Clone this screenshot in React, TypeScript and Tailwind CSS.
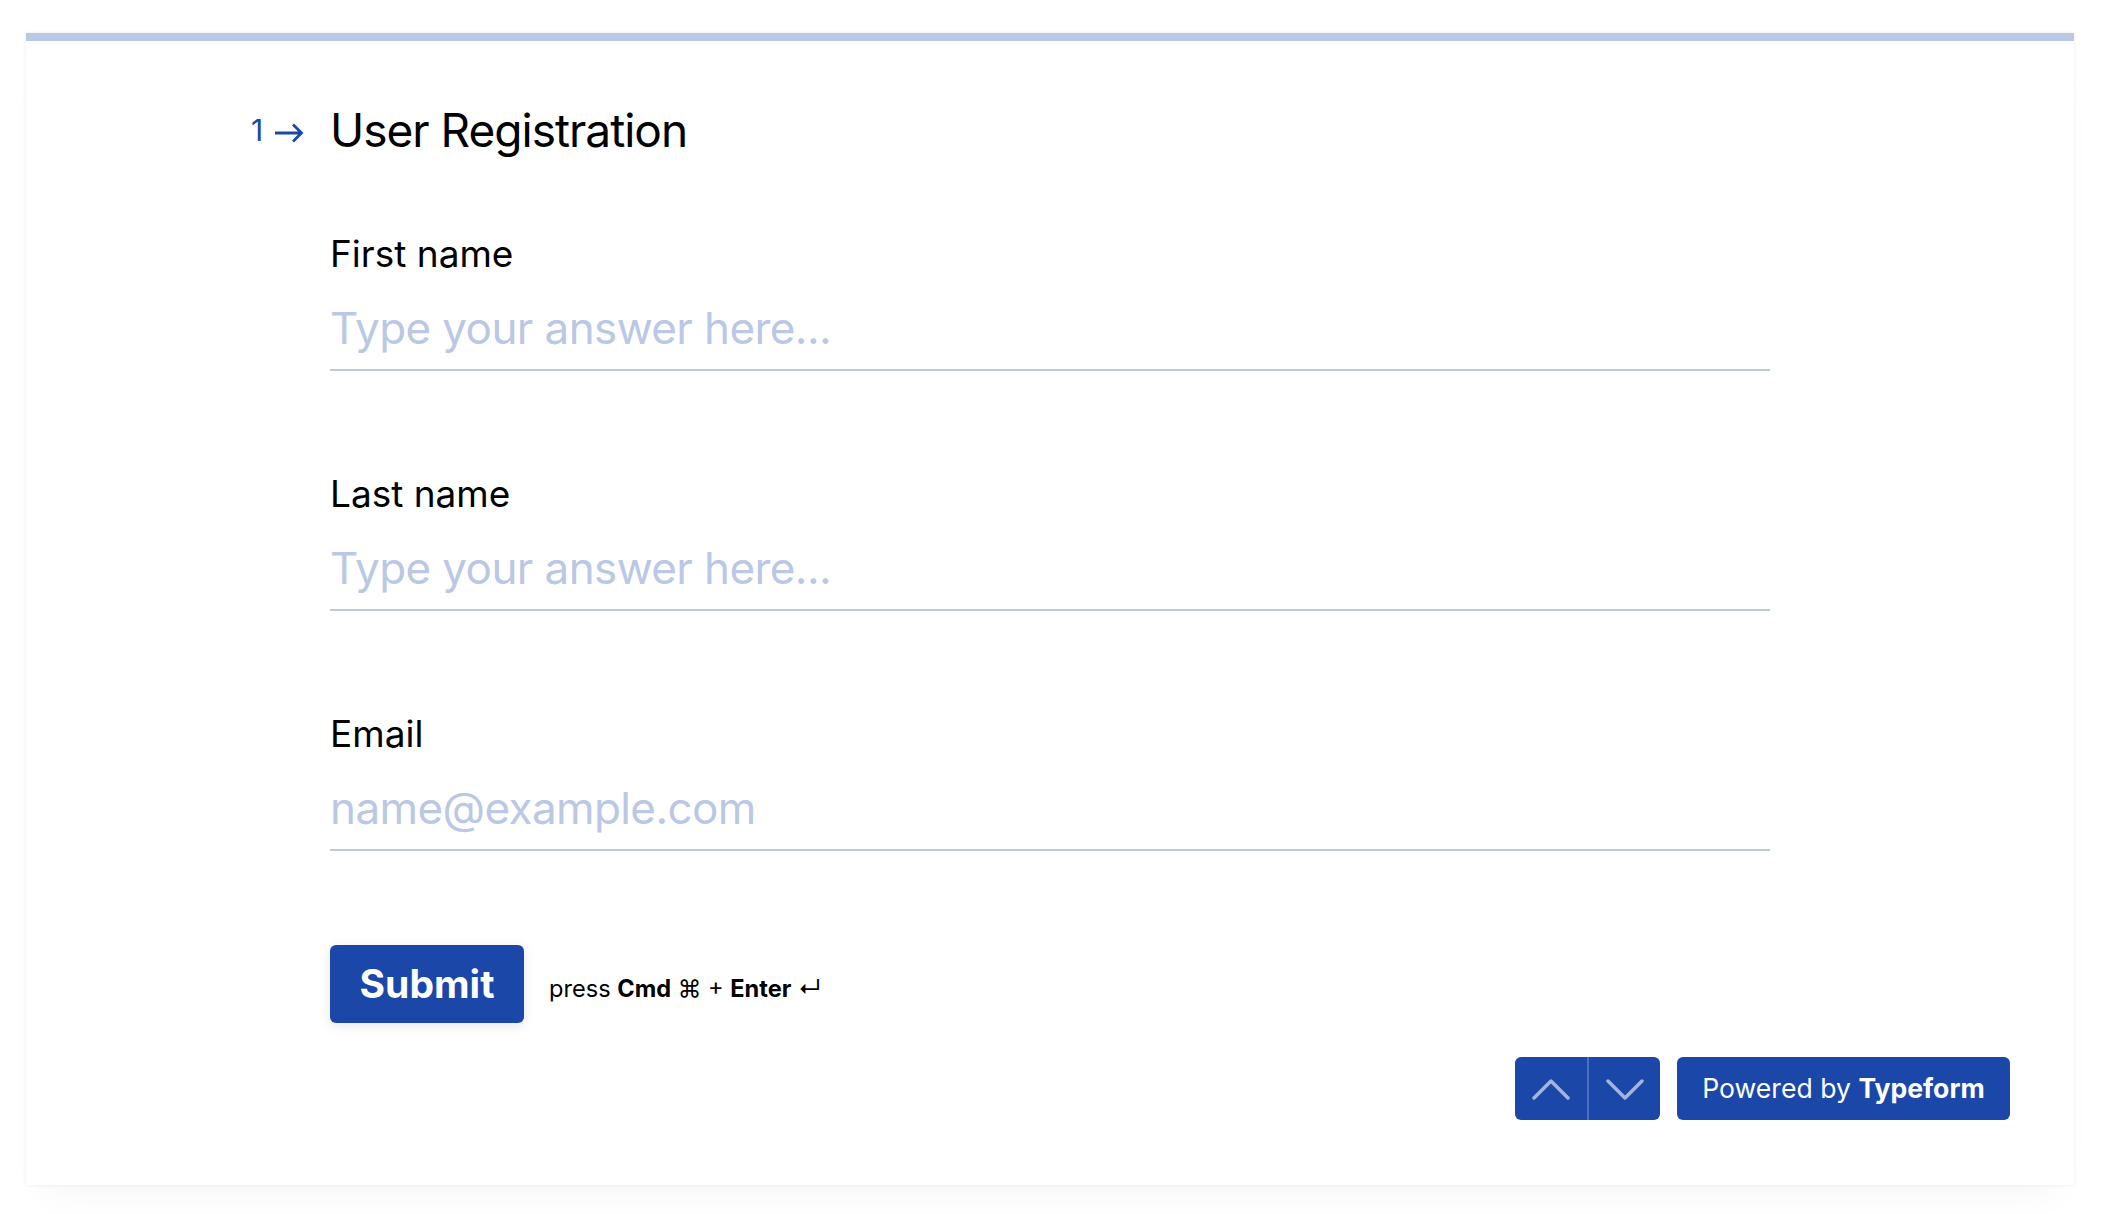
import React from "react";

const FONT = { fontFamily: "Inter, 'Noto Sans', 'DejaVu Sans', sans-serif" };

function Field({ label, placeholder }: { label: string; placeholder: string }) {
  return (
    <div className="flex flex-col">
      <label className="pt-[1px] text-[37px] leading-[43px] text-black">{label}</label>
      <input
        type="text"
        placeholder={placeholder}
        className="mt-[22px] h-[74px] w-[1440px] bg-transparent pt-[4px] pb-[14px] text-[44px] leading-[54px] tracking-[-0.6px] text-[#1a47a8] outline-none border-b-2 border-[#bac8e5] placeholder:text-[#bac8e5]"
        style={FONT}
      />
    </div>
  );
}

export default function App() {
  return (
    <div className="min-h-screen bg-white pt-[33px] pl-[26px]" style={FONT}>
      <div className="flex h-[1152px] w-[2048px] flex-col bg-white shadow-[0_0_4px_rgba(0,0,0,0.07),0_26px_40px_-22px_rgba(0,0,0,0.05)]">
        <div className="h-[8px] w-full bg-[#bac8e5]" />
        <div className="flex flex-col pl-[304px] pt-[61px]">
          <div className="ml-[-79px] flex h-[56px] items-center">
            <div className="flex w-[79px] items-center">
              <span className="w-[23px] text-[30px] leading-[30px] text-[#1a47a8]">1</span>
              <svg width="30" height="20" viewBox="0 0 30 20" className="mt-[5px]" fill="none">
                <path d="M1 10H27M19 1.5L27.5 10L19 18.5" stroke="#1a47a8" strokeWidth="2.8" />
              </svg>
            </div>
            <h1 className="text-[46px] leading-[56px] font-normal tracking-[-1px] text-black">User Registration</h1>
          </div>

          <div className="mt-[73px] flex flex-col gap-[100px]">
            <Field label="First name" placeholder="Type your answer here..." />
            <Field label="Last name" placeholder="Type your answer here..." />
            <Field label="Email" placeholder="name@example.com" />
          </div>

          <div className="mt-[94px] flex items-center">
            <button className="h-[78px] w-[194px] rounded-[6px] bg-[#1a47a8] text-[39px] font-bold text-white shadow-[0_3px_12px_rgba(0,0,0,0.1)]">
              Submit
            </button>
            <span className="ml-[25px] mt-[10px] text-[23.6px] text-black" style={{ fontFamily: "Inter, 'DejaVu Sans', sans-serif" }}>
              press <b>Cmd</b> ⌘ + <b>Enter</b> ↵
            </span>
          </div>
        </div>

        <div className="mt-auto flex justify-end gap-[17px] pb-[65px] pr-[64px]">
          <div className="flex h-[63px] w-[145px] overflow-hidden rounded-[6px] bg-[#1a47a8]">
            <button className="flex h-full w-[72px] items-center justify-center">
              <svg width="38" height="22" viewBox="0 0 38 22" fill="none">
                <path d="M2 20L19 3L36 20" stroke="rgba(255,255,255,0.6)" strokeWidth="3.5" strokeLinecap="round" strokeLinejoin="round" />
              </svg>
            </button>
            <div className="h-full w-[2px] bg-[#4d6fc0]" />
            <button className="flex h-full w-[71px] items-center justify-center">
              <svg width="38" height="22" viewBox="0 0 38 22" fill="none">
                <path d="M2 3L19 20L36 3" stroke="rgba(255,255,255,0.6)" strokeWidth="3.5" strokeLinecap="round" strokeLinejoin="round" />
              </svg>
            </button>
          </div>
          <button className="flex h-[63px] w-[333px] items-center justify-center rounded-[6px] bg-[#1a47a8] text-[26.6px] text-white">
            Powered by&nbsp;<span className="font-bold">Typeform</span>
          </button>
        </div>
      </div>
    </div>
  );
}
